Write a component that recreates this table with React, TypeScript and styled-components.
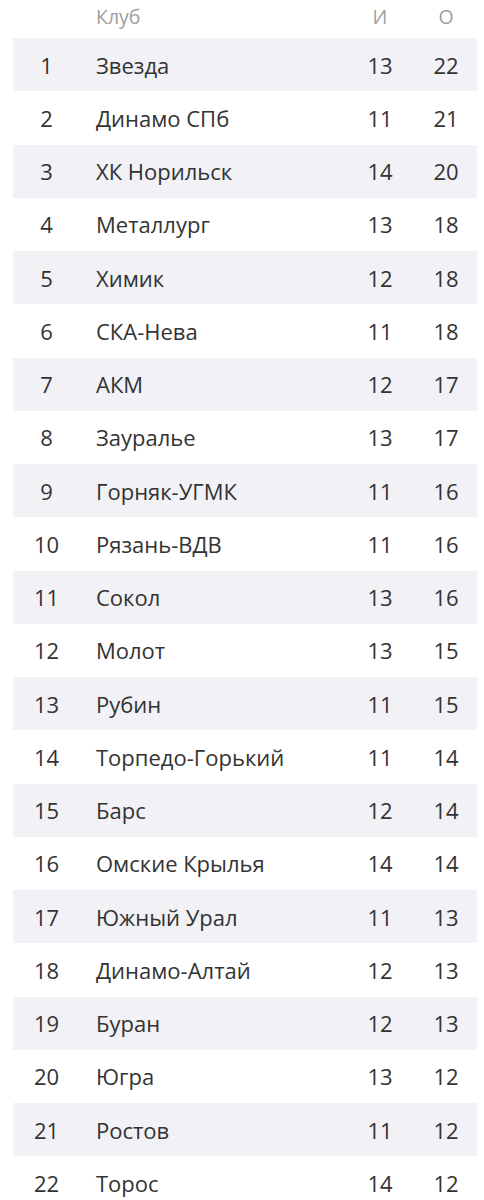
import React from "react";
import styled, { createGlobalStyle } from "styled-components";

const Global = createGlobalStyle`
  html, body { margin: 0; padding: 0; background: #ffffff; }
  body { font-family: "Open Sans", "Liberation Sans", sans-serif; }
`;

const Table = styled.div`
  margin: 0 7px 0 13px;
  display: flex;
  flex-direction: column;
`;

const Grid = styled.div<{ $shaded?: boolean; $head?: boolean }>`
  display: grid;
  grid-template-columns: 67px 265px 70px 62px;
  align-items: center;
  height: ${(p) => (p.$head ? "38px" : "53.25px")};
  background: ${(p) => (p.$shaded ? "#f1f1f6" : "transparent")};
  color: ${(p) => (p.$head ? "#a0a0a0" : "#333333")};
  font-size: ${(p) => (p.$head ? "19.5px" : "22px")};
  padding-bottom: ${(p) => (p.$head ? "5px" : "0")};
  box-sizing: border-box;
`;

const Num = styled.div`
  text-align: center;
`;

const Club = styled.div`
  padding-left: 16px;
  white-space: nowrap;
`;

const Stat = styled.div`
  text-align: center;
`;

const rows: [string, number, number][] = [
  ["Звезда", 13, 22],
  ["Динамо СПб", 11, 21],
  ["ХК Норильск", 14, 20],
  ["Металлург", 13, 18],
  ["Химик", 12, 18],
  ["СКА-Нева", 11, 18],
  ["АКМ", 12, 17],
  ["Зауралье", 13, 17],
  ["Горняк-УГМК", 11, 16],
  ["Рязань-ВДВ", 11, 16],
  ["Сокол", 13, 16],
  ["Молот", 13, 15],
  ["Рубин", 11, 15],
  ["Торпедо-Горький", 11, 14],
  ["Барс", 12, 14],
  ["Омские Крылья", 14, 14],
  ["Южный Урал", 11, 13],
  ["Динамо-Алтай", 12, 13],
  ["Буран", 12, 13],
  ["Югра", 13, 12],
  ["Ростов", 11, 12],
  ["Торос", 14, 12],
];

export default function App() {
  return (
    <>
      <Global />
      <Table>
        <Grid $head>
          <Num />
          <Club>Клуб</Club>
          <Stat>И</Stat>
          <Stat>О</Stat>
        </Grid>
        {rows.map(([name, g, p], i) => (
          <Grid key={name} $shaded={i % 2 === 0}>
            <Num>{i + 1}</Num>
            <Club>{name}</Club>
            <Stat>{g}</Stat>
            <Stat>{p}</Stat>
          </Grid>
        ))}
      </Table>
    </>
  );
}
